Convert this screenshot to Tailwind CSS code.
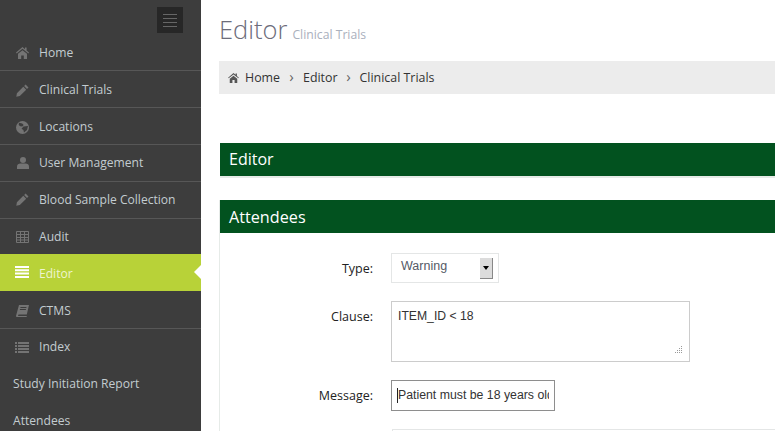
<!DOCTYPE html>
<html>
<head>
<meta charset="utf-8">
<script src="https://cdn.jsdelivr.net/npm/@tailwindcss/browser@4"></script>
</head>
<body class="font-['Open_Sans',sans-serif] bg-white">
<div class="flex h-[431px] w-[775px] overflow-hidden">

    <!-- sidebar -->
    <aside class="w-[201px] shrink-0 bg-[#3d3d3d] text-[12.1px] text-[#c3ccd0]">
        <div class="flex justify-end h-[34.6px] pt-[7px] pr-[18px]">
            <button type="button" class="flex flex-col justify-center gap-[3px] items-center w-[26px] h-[26px] bg-[#272727]">
                <span class="block w-[14px] h-px bg-[#666]"></span>
                <span class="block w-[14px] h-px bg-[#666]"></span>
                <span class="block w-[14px] h-px bg-[#666]"></span>
                <span class="block w-[14px] h-px bg-[#666]"></span>
            </button>
        </div>
        <nav class="flex flex-col">
            <a class="flex items-center h-[36.8px] pt-[2px] pl-[16px] border-b border-[#575757]">
                <svg class="w-[13px] h-[12px] mr-[10px] text-[#747474]" viewBox="0 0 13 12" fill="currentColor"><path d="M6.500 0 0 5.600l.7.800L6.500 1.800l5.800 4.600.7-.8-2.400-2V.6H9v1.600zM2 6.800l4.500-3.600L11 6.800V12H7.800V8.500H5.200V12H2z"/></svg>
                <span>Home</span>
            </a>
            <a class="flex items-center h-[36.8px] pt-[2px] pl-[16px] border-b border-[#575757]">
                <svg class="w-[13px] h-[13px] mr-[10px] text-[#747474]" viewBox="0 0 13 13" fill="currentColor"><path d="M9.600.5 12.500 3.400 11 4.900 8.100 2zM7.300 2.800l2.900 2.900-6.400 6.400-3.500.6.600-3.500z"/></svg>
                <span>Clinical Trials</span>
            </a>
            <a class="flex items-center h-[36.8px] pt-[2px] pl-[16px] border-b border-[#575757]">
                <svg class="w-[13px] h-[13px] mr-[10px] text-[#747474]" viewBox="0 0 13 13" fill="currentColor"><path fill-rule="evenodd" d="M6.500 0a6.500 6.500 0 1 0 0 13 6.500 6.500 0 0 0 0-13zM3 1.800l3.200.6 1.500 1.500-1.500 1.700-2-.3-1.500-1.300zM12 5l-1 4-3 2.500-.6-2.500-1.900-1.200 2-2.300z"/></svg>
                <span>Locations</span>
            </a>
            <a class="flex items-center h-[36.8px] pl-[17px] border-b border-[#575757]">
                <svg class="w-[12px] h-[12px] mr-[10px] text-[#747474]" viewBox="0 0 12 12" fill="currentColor"><circle cx="6" cy="3" r="3"/><path d="M0 12V9.500C0 7.500 1.500 6.500 3.500 6.500h5C10.500 6.500 12 7.500 12 9.500V12z"/></svg>
                <span>User Management</span>
            </a>
            <a class="flex items-center h-[36.8px] pl-[16px] border-b border-[#575757]">
                <svg class="w-[13px] h-[13px] mr-[10px] text-[#747474]" viewBox="0 0 13 13" fill="currentColor"><path d="M9.600.5 12.500 3.400 11 4.900 8.100 2zM7.300 2.800l2.900 2.900-6.400 6.400-3.500.6.600-3.500z"/></svg>
                <span>Blood Sample Collection</span>
            </a>
            <a class="flex items-center h-[35.4px] pt-[2px] pl-[16px]">
                <svg class="w-[13px] h-[12px] mr-[10px] text-[#747474]" viewBox="0 0 13 12" fill="none" stroke="currentColor"><path d="M.5.500h12v11H.5zM.5 3.500h12M.5 6.500h12M.5 9h12M4.500.5v11M8.500.5v11"/></svg>
                <span>Audit</span>
            </a>
            <a class="relative flex items-center h-[37px] pt-[4px] pl-[15px] bg-[#b8d238] text-[#eef4cf]">
                <svg class="w-[14px] h-[12px] mr-[10px] -mt-[4px] text-white" viewBox="0 0 14 12" fill="currentColor"><path d="M0 0h14v2H0zM0 3.300h14v2H0zM0 6.600h14v2H0zM0 10h14v2H0z"/></svg>
                <span>Editor</span>
                <span class="absolute right-0 top-[11px] border-y-[7.500px] border-r-[7px] border-y-transparent border-r-white"></span>
            </a>
            <a class="flex items-center h-[38px] pt-[3px] pl-[16px] border-b border-[#575757]">
                <svg class="w-[13px] h-[12px] mr-[10px] text-[#747474]" viewBox="0 0 13 12" fill="currentColor"><path fill-rule="evenodd" d="M3 0h10l-2.200 9.500H2.500L2 11h8.800l-.2 1H1C.2 12-.1 11.300.1 10.500zM4.500 2l-.2 1h6l.2-1zM4 4l-.2 1h6l.2-1z"/></svg>
                <span>CTMS</span>
            </a>
            <a class="flex items-center h-[36.8px] pl-[15px]">
                <svg class="w-[14px] h-[11px] mr-[10px] text-[#747474]" viewBox="0 0 14 11" fill="currentColor"><path d="M0 0h2v2H0zM3 0h11v2H3zM0 3h2v2H0zM3 3h11v2H3zM0 6h2v2H0zM3 6h11v2H3zM0 9h2v2H0zM3 9h11v2H3z"/></svg>
                <span>Index</span>
            </a>
            <a class="flex items-center h-[36.8px] pl-[13px]">Study Initiation Report</a>
            <a class="flex items-center h-[36.8px] pl-[13px]">Attendees</a>
        </nav>
    </aside>

    <!-- main -->
    <main class="flex-1 pl-[18px] min-w-0">
        <h1 class="flex items-baseline gap-[5px] h-[61px] pt-[9px] font-light text-[25.5px] leading-[40px] text-[#6c6c7a] whitespace-nowrap">Editor <small class="text-[12.2px] font-normal text-[#aab0bd]">Clinical Trials</small></h1>

        <div class="flex items-center h-[33px] pt-[1px] pl-[9px] bg-[#ececec] text-[12.4px] text-[#333]">
            <svg class="w-[11px] h-[10px] mr-[6px] text-[#555]" viewBox="0 0 13 12" fill="currentColor"><path d="M6.500 0 0 5.600l.7.800L6.500 1.800l5.800 4.600.7-.8-2.400-2V.6H9v1.600zM2 6.800l4.500-3.600L11 6.800V12H7.800V8.500H5.200V12H2z"/></svg>
            <span>Home</span>
            <span class="w-[23px] -mt-[4px] text-center text-[15px] leading-[15px] text-[#666]">›</span>
            <span>Editor</span>
            <span class="w-[22px] -mt-[4px] text-center text-[15px] leading-[15px] text-[#666]">›</span>
            <span>Clinical Trials</span>
        </div>

        <section class="mt-[49px] ml-px border-b-2 border-[#e6ebe8]">
            <h2 class="h-[33px] pl-[9px] bg-[#02521f] text-white text-[16px] leading-[33px]">Editor</h2>
        </section>

        <section class="mt-[22px] border-l border-[#e6ebe8]">
            <h2 class="h-[33px] pl-[9px] pt-px bg-[#02521f] text-white text-[16.2px] leading-[33px]">Attendees</h2>

            <div class="flex flex-col pt-[20px] text-[12.5px] text-[#222]">
                <div class="flex items-center">
                    <label class="w-[154px] text-right pr-px mr-[17px] pt-[2px]">Type:</label>
                    <div class="flex items-center justify-between w-[108px] h-[30px] pl-[9px] pr-[5px] border border-[#e4e6e6] text-[#555a66] font-['Liberation_Sans',sans-serif]">
                        <span class="-mt-[3px]">Warning</span>
                        <span class="flex items-center justify-center w-[13px] h-[21px] bg-[#dcdcdc] border-r border-b border-[#888]">
                            <span class="border-x-[3.500px] border-t-[4px] border-x-transparent border-t-black"></span>
                        </span>
                    </div>
                </div>
                <div class="flex items-start mt-[18px]">
                    <label class="w-[154px] text-right pr-px mr-[17px] pt-[7px]">Clause:</label>
                    <div class="relative">
                        <textarea readonly class="block resize-none w-[299px] h-[61px] px-[6px] py-[5px] border border-[#ccc] text-[12.2px] text-[#333] font-['Liberation_Sans',sans-serif] outline-none">ITEM_ID &lt; 18</textarea>
                        <!-- resize grip -->
                        <svg class="absolute right-[7px] bottom-[7px] w-[9px] h-[9px] text-[#999]" viewBox="0 0 9 9" fill="currentColor"><path d="M7 0h1v1H7zM7 2h1v1H7zM5 2h1v1H5zM7 4h1v1H7zM5 4h1v1H5zM3 4h1v1H3zM7 6h1v1H7zM5 6h1v1H5zM3 6h1v1H3zM1 6h1v1H1z"/></svg>
                    </div>
                </div>
                <div class="flex items-center mt-[18px]">
                    <label class="w-[154px] text-right pr-px mr-[17px] pt-[2px]">Message:</label>
                    <div class="w-[164px] h-[31px] pl-[5px] pr-[5px] border border-[#8e8e8e] text-[12.3px] leading-[29px] text-[#333] font-['Liberation_Sans',sans-serif] whitespace-nowrap">
                        <div class="overflow-hidden"><span class="inline-block w-px h-[15px] bg-[#222] align-middle"></span><span class="align-middle">Patient must be 18 years old</span></div>
                    </div>
                </div>
                <div class="flex mt-[18px]">
                    <div class="ml-[172px] flex-1 h-[20px] border-t border-l border-[#e4e6e6]"></div>
                </div>
            </div>
        </section>
    </main>
</div>
</body>
</html>
